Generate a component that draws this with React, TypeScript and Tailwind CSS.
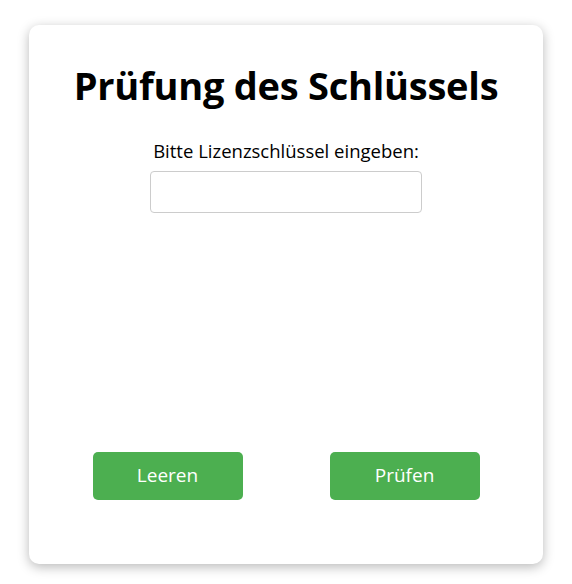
export default function App() {
  return (
    <div className="w-[572px] h-[584px] bg-white pt-[25px] pl-[29px]" style={{ fontFamily: '"Open Sans", sans-serif' }}>
      <div className="w-[514px] h-[539px] bg-white rounded-[10px] shadow-[0_3px_12px_rgba(0,0,0,0.28)] px-5 pt-5 flex flex-col items-center">
        <h1 className="text-[38px] leading-[48px] font-bold text-black mt-[16px] tracking-[-0.25px] whitespace-nowrap">Prüfung des Schlüssels</h1>
        <label className="text-[18.5px] leading-[24px] text-black mt-[30px] whitespace-nowrap">Bitte Lizenzschlüssel eingeben:</label>
        <input className="w-[272px] h-[42px] border border-[#ccc] rounded-[4px] mt-[7.5px] outline-none" />
        <div className="w-full flex justify-around mt-[239px]">
          <button className="w-[150px] h-[48px] bg-[#4CAF50] text-white text-[19px] rounded-[5px]">Leeren</button>
          <button className="w-[150px] h-[48px] bg-[#4CAF50] text-white text-[19px] rounded-[5px]">Prüfen</button>
        </div>
      </div>
    </div>
  );
}
